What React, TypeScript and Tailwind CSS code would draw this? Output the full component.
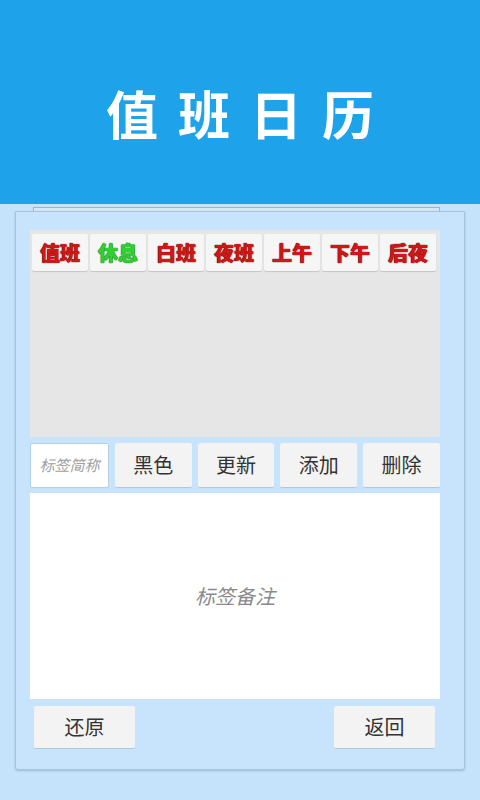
import React from "react";

const tags = [
  { label: "值班", color: "red" },
  { label: "休息", color: "green" },
  { label: "白班", color: "red" },
  { label: "夜班", color: "red" },
  { label: "上午", color: "red" },
  { label: "下午", color: "red" },
  { label: "后夜", color: "red" },
];

const actions = ["黑色", "更新", "添加", "删除"];

const font = "font-['Noto_Sans_CJK_SC','Noto_Sans',sans-serif]";

export default function App() {
  return (
    <div className={`min-h-[800px] w-[480px] bg-[#c5e3fb] ${font}`}>
      {/* title bar */}
      <div className="flex h-[204px] items-center justify-center bg-[#1ea2ea] pt-[22px]">
        <h1 className="pl-[20px] text-[52px] font-bold tracking-[20px] text-white">值班日历</h1>
      </div>

      <div className="pt-[3px]">
        <div className="ml-[33px] h-[4px] w-[407px] border-x border-t border-[#9fb3c4] bg-[#d5e6f4]" />

        {/* editor panel */}
        <div className="ml-[15px] w-[450px] rounded-b-[3px] border border-[#a8c4da] bg-[#c7e4fc] pb-[20px] pl-[14px] pr-[24px] pt-[18px] shadow-[0_1px_2px_rgba(80,110,140,0.35)]">
          {/* tag list */}
          <div className="h-[207px] bg-[#e6e6e6] px-[2px] pt-[4px]">
            <div className="flex gap-[2px]">
              {tags.map((t) => (
                <div
                  key={t.label}
                  className={`flex h-[37px] w-[56px] items-center justify-center rounded-[2px] bg-[#f6f6f6] text-[20px] font-black shadow-[0_1px_1px_rgba(0,0,0,0.15)] ${
                    t.color === "green"
                      ? "text-[#2fd22f] [text-shadow:0_0_1px_#0a6a0a,0_0_1px_#0a6a0a]"
                      : "text-[#d21616] [text-shadow:0_0_1px_#6a0000,0_0_1px_#6a0000]"
                  }`}
                >
                  {t.label}
                </div>
              ))}
            </div>
          </div>

          {/* name input + actions */}
          <div className="mt-[6px] flex h-[45px] gap-[6px]">
            <div className="flex flex-1 items-center justify-center rounded-[2px] border border-[#b6cfe2] bg-white text-[15px] italic text-[#a0a0a0]">
              标签简称
            </div>
            {actions.map((a) => (
              <button
                key={a}
                type="button"
                className="flex-1 rounded-[2px] border-b border-[#b2c8da] bg-[#f3f3f3] text-[20px] text-[#333]"
              >
                {a}
              </button>
            ))}
          </div>

          {/* note area */}
          <div className="mt-[5px] flex h-[206px] items-center justify-center bg-white text-[20px] italic text-[#8a8a8a]">
            标签备注
          </div>

          {/* footer buttons */}
          <div className="mt-[7px] flex justify-between pl-[4px] pr-[5px]">
            <button
              type="button"
              className="h-[43px] w-[101px] rounded-[2px] border-b border-[#b2c8da] bg-[#f3f3f3] text-[20px] text-[#333]"
            >
              还原
            </button>
            <button
              type="button"
              className="h-[43px] w-[101px] rounded-[2px] border-b border-[#b2c8da] bg-[#f3f3f3] text-[20px] text-[#333]"
            >
              返回
            </button>
          </div>
        </div>
      </div>
    </div>
  );
}
